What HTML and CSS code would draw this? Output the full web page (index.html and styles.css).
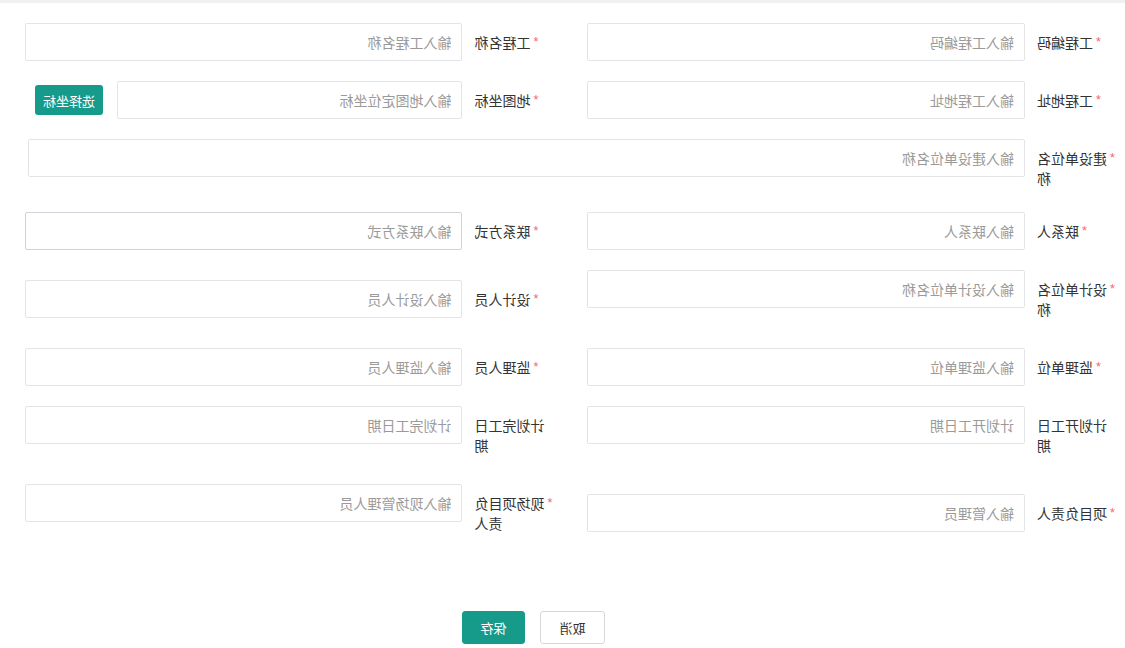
FILE: index.html
```html
<!DOCTYPE html>
<html lang="zh-CN">
<head>
<meta charset="utf-8">
<title>工程信息</title>
<link rel="stylesheet" href="styles.css">
</head>
<body>
<div class="page">
  <form class="form">
    <div class="row">
      <div class="item">
        <label class="label"><span class="req">*</span>工程编码</label>
        <input class="input" placeholder="输入工程编码">
      </div>
      <div class="item">
        <label class="label"><span class="req">*</span>工程名称</label>
        <input class="input" placeholder="输入工程名称">
      </div>
    </div>
    <div class="row">
      <div class="item">
        <label class="label"><span class="req">*</span>工程地址</label>
        <input class="input" placeholder="输入工程地址">
      </div>
      <div class="item">
        <label class="label"><span class="req">*</span>地图坐标</label>
        <input class="input" placeholder="输入地图定位坐标">
        <button type="button" class="btn-pick">选择坐标</button>
      </div>
    </div>
    <div class="row row-wide">
      <div class="item item-full">
        <label class="label"><span class="req">*</span>建设单位名称</label>
        <input class="input" placeholder="输入建设单位名称">
      </div>
    </div>
    <div class="row">
      <div class="item">
        <label class="label"><span class="req">*</span>联系人</label>
        <input class="input" placeholder="输入联系人">
      </div>
      <div class="item">
        <label class="label"><span class="req">*</span>联系方式</label>
        <input class="input input-hover" placeholder="输入联系方式">
      </div>
    </div>
    <div class="row">
      <div class="item">
        <label class="label"><span class="req">*</span>设计单位名称</label>
        <input class="input" placeholder="输入设计单位名称">
      </div>
      <div class="item">
        <label class="label"><span class="req">*</span>设计人员</label>
        <input class="input" placeholder="输入设计人员">
      </div>
    </div>
    <div class="row">
      <div class="item">
        <label class="label"><span class="req">*</span>监理单位</label>
        <input class="input" placeholder="输入监理单位">
      </div>
      <div class="item">
        <label class="label"><span class="req">*</span>监理人员</label>
        <input class="input" placeholder="输入监理人员">
      </div>
    </div>
    <div class="row">
      <div class="item">
        <label class="label">计划开工日期</label>
        <input class="input" placeholder="计划开工日期">
      </div>
      <div class="item">
        <label class="label">计划完工日期</label>
        <input class="input" placeholder="计划完工日期">
      </div>
    </div>
    <div class="row">
      <div class="item">
        <label class="label"><span class="req">*</span>项目负责人</label>
        <input class="input" placeholder="输入管理员">
      </div>
      <div class="item">
        <label class="label"><span class="req">*</span>现场项目负责人</label>
        <input class="input" placeholder="输入现场管理人员">
      </div>
    </div>
    <div class="actions">
      <button type="button" class="btn btn-cancel">取消</button>
      <button type="button" class="btn btn-save">保存</button>
    </div>
  </form>
</div>
</body>
</html>
```

FILE: styles.css
```css
html, body {
  margin: 0;
  padding: 0;
  background: #fff;
  overflow: hidden;
}

body {
  font-family: "Noto Sans CJK SC", "Microsoft YaHei", sans-serif;
  font-size: 14px;
  color: #333;
}

.page {
  width: 1125px;
  height: 648px;
  transform: scaleX(-1);
  border-top: 3px solid #f0f0f0;
  box-sizing: border-box;
}

.form {
  padding-top: 20px;
}

.row {
  display: flex;
  align-items: center;
  margin-bottom: 20px;
}

.item {
  display: flex;
  align-items: flex-start;
  width: 562.5px;
  padding-right: 25px;
  box-sizing: border-box;
}

.item-full {
  width: 1125px;
  padding-right: 28px;
}

.label {
  display: block;
  flex: 0 0 100px;
  box-sizing: border-box;
  padding: 9px 12px 9px 8px;
  line-height: 20px;
  text-align: right;
  color: #333;
  font-size: 14px;
}

.row-wide .label {
  padding-bottom: 4px;
}

.req {
  display: inline-block;
  vertical-align: top;
  line-height: 20px;
  height: 20px;
  color: #f56c6c;
  font-family: "Liberation Sans", sans-serif;
  font-size: 13px;
  margin-right: 3px;
}

.input {
  flex: 1;
  min-width: 0;
  height: 38px;
  margin: 0;
  box-sizing: border-box;
  border: 1px solid #e2e4e8;
  border-radius: 2px;
  padding: 0 10px;
  font-family: "Noto Sans CJK SC", sans-serif;
  font-size: 14px;
  color: #333;
  outline: none;
  background: #fff;
}

.input::placeholder {
  color: #9a9a9a;
}

.input-hover {
  border-color: #cfd2d8;
}

.btn-pick {
  flex: 0 0 68px;
  height: 30px;
  margin: 4px 10px 0 14px;
  border: none;
  border-radius: 3px;
  background: #169b8b;
  color: #fff;
  font-family: "Noto Sans CJK SC", sans-serif;
  font-size: 13px;
  padding: 0;
}

.actions {
  display: flex;
  justify-content: center;
  gap: 15px;
  padding-left: 58px;
  margin-top: 69px;
}

.btn {
  width: 65px;
  height: 33px;
  box-sizing: border-box;
  border-radius: 3px;
  font-family: "Noto Sans CJK SC", sans-serif;
  font-size: 13px;
  padding: 0;
}

.btn-cancel {
  background: #fff;
  border: 1px solid #d6d8dc;
  color: #333;
}

.btn-save {
  width: 63px;
  background: #169b8b;
  border: 1px solid #169b8b;
  color: #fff;
}
```
